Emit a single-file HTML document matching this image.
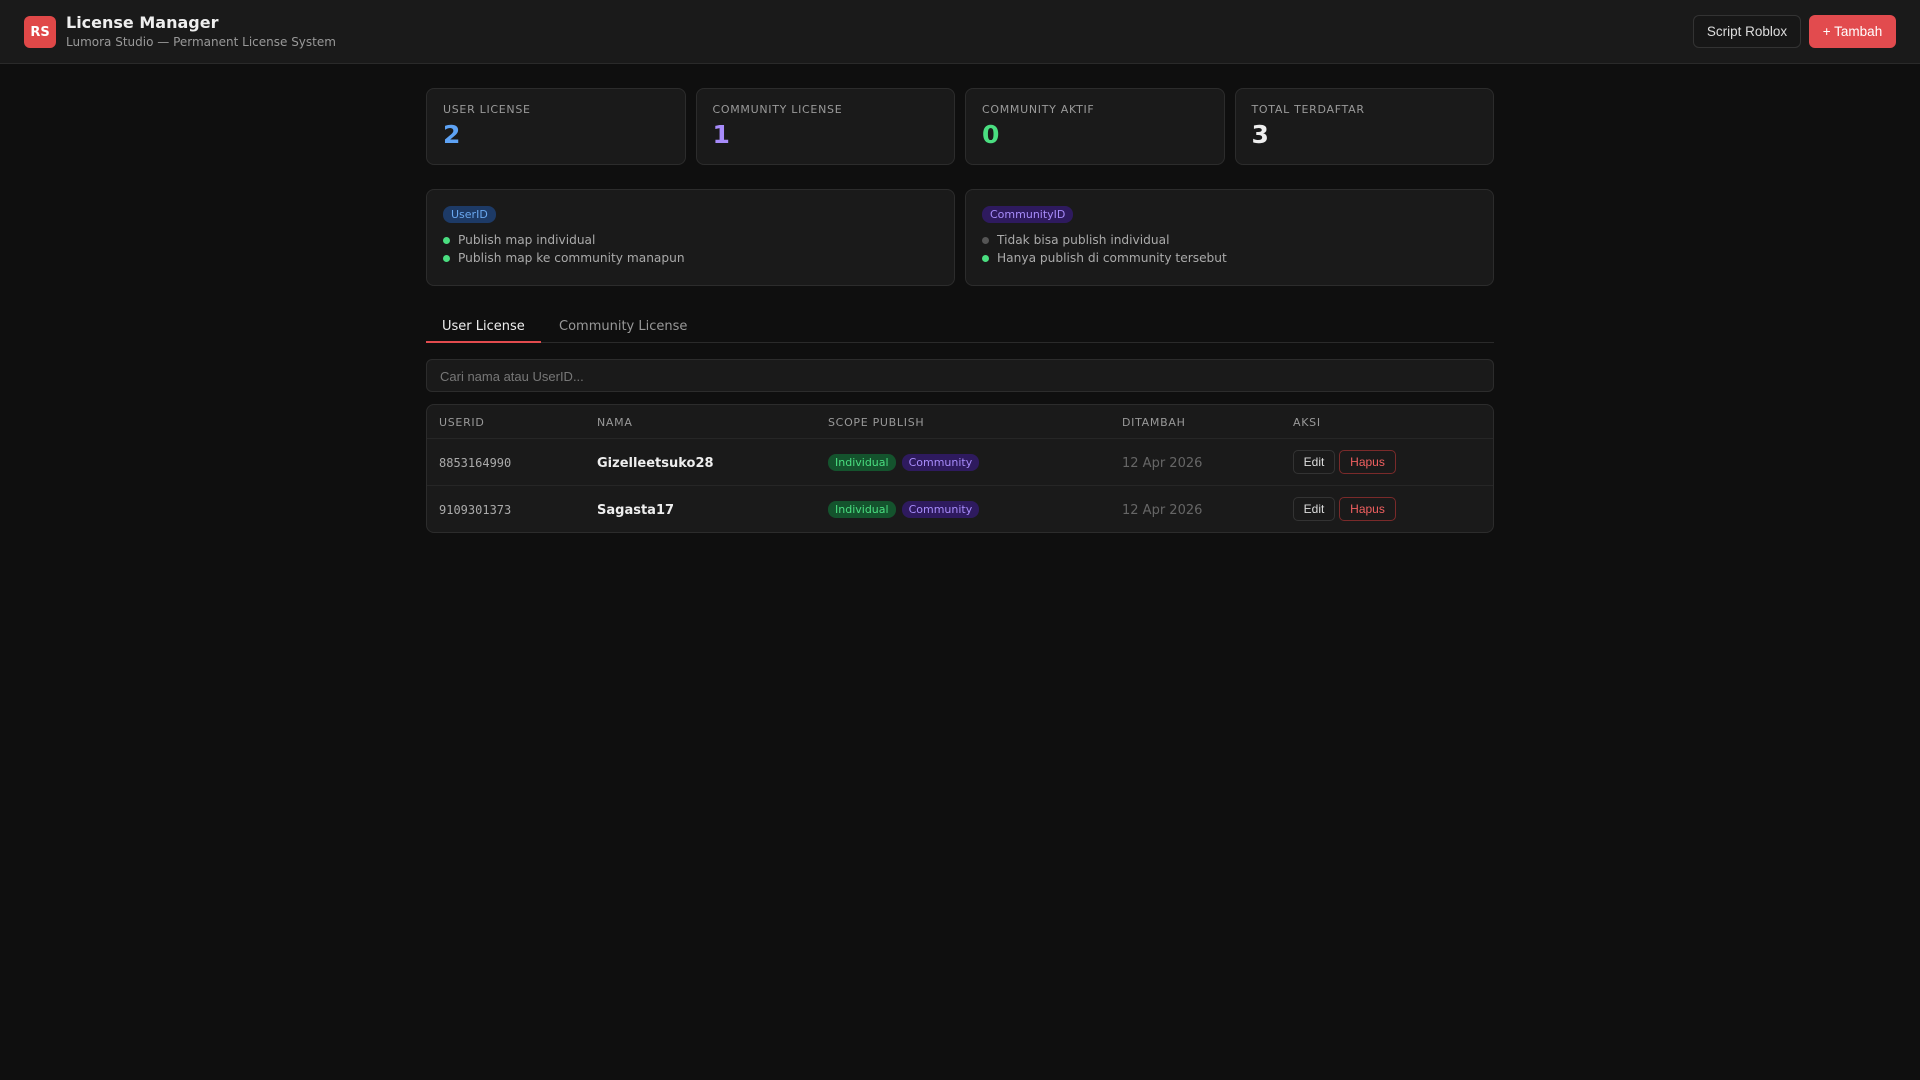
<!DOCTYPE html>
<html><head><meta charset="utf-8"><style>
*{box-sizing:border-box;margin:0;padding:0}
body{width:1920px;height:1080px;background:#0f0f0f;color:#e5e5e5;font-family:"DejaVu Sans",sans-serif;overflow:hidden}
.hdr{height:64px;background:#1a1a1a;border-bottom:1px solid #2a2a2a;position:relative}
.logo{position:absolute;left:24px;top:16px;width:32px;height:32px;border-radius:6px;background:#e04848;color:#fff;font-weight:bold;font-size:13px;display:flex;align-items:center;justify-content:center}
.t1{position:absolute;left:66px;top:13px;font-size:16px;font-weight:bold;color:#eee}
.t2{position:absolute;left:66px;top:35px;font-size:12px;color:#999}
.btn{position:absolute;top:15px;height:33px;border-radius:6px;font-family:"Liberation Sans",sans-serif;font-size:13.5px;display:flex;align-items:center;justify-content:center}
.b1{left:1693px;width:108px;border:1px solid #333;background:#171717;color:#ddd}
.b2{left:1809px;width:87px;background:#e24b4e;color:#fff}
.wrap{position:absolute;left:426px;width:1068px}
.stats{top:88px;display:flex;gap:10px}
.card{background:#1a1a1a;border:1px solid #2c2c2c;border-radius:8px}
.stat{flex:1;height:77px;padding:14px 16px}
.lab{font-size:11px;letter-spacing:.7px;color:#9a9a9a;margin-top:0}
.val{font-size:25px;font-weight:bold;margin-top:4px}
.info{top:189px;display:flex;gap:10px}
.inf{flex:1;height:97px;padding:13px 16px}
.bdg{display:inline-block;font-size:11px;padding:2px 8px;border-radius:8px}
.li{font-size:12.2px;color:#aaa;margin-top:4px;display:flex;align-items:center}
.li:first-of-type{margin-top:10px}
.dot{width:7px;height:7px;border-radius:50%;background:#4ade80;margin-right:8px}
.tabs{top:310px;height:33px;border-bottom:1px solid #2a2a2a;font-size:13px}
.tab{position:absolute;top:9px}
.search{top:359px;height:33px;background:#1a1a1a;border:1px solid #2c2c2c;border-radius:6px;font-size:13px;color:#777;padding:9px 13px;font-family:"Liberation Sans",sans-serif}
.tbl{top:404px;height:129px;overflow:hidden}
.row{position:relative;border-bottom:1px solid #262626}
.row>span{position:absolute}
.th{height:34px;font-size:11px;letter-spacing:.7px;color:#999}
.th span{top:11px}
.tr{height:47px;font-size:13px}
.tr>span{top:17px}
.mono{font-family:"DejaVu Sans Mono",monospace;color:#aaa;font-size:12px}
.pill{font-size:11px;padding:2px 7px;border-radius:8px;margin-right:6px}
.sb{display:inline-block;font-size:12px;border-radius:5px;height:24px;line-height:22px;text-align:center;font-family:"Liberation Sans",sans-serif;margin-right:4px}
</style></head><body>
<div class="hdr"><div class="logo">RS</div><div class="t1">License Manager</div><div class="t2">Lumora Studio — Permanent License System</div>
<div class="btn b1">Script Roblox</div><div class="btn b2">+ Tambah</div></div>
<div class="wrap stats">
<div class="card stat"><div class="lab">USER LICENSE</div><div class="val" style="color:#5ea3f5">2</div></div>
<div class="card stat"><div class="lab">COMMUNITY LICENSE</div><div class="val" style="color:#a78bfa">1</div></div>
<div class="card stat"><div class="lab">COMMUNITY AKTIF</div><div class="val" style="color:#4ade80">0</div></div>
<div class="card stat"><div class="lab">TOTAL TERDAFTAR</div><div class="val" style="color:#eee">3</div></div>
</div>
<div class="wrap info">
<div class="card inf"><span class="bdg" style="background:#1d3a66;color:#6aa8f0">UserID</span>
<div class="li"><i class="dot"></i>Publish map individual</div><div class="li"><i class="dot"></i>Publish map ke community manapun</div></div>
<div class="card inf"><span class="bdg" style="background:#2e1a5e;color:#a78bfa">CommunityID</span>
<div class="li"><i class="dot" style="background:#555"></i>Tidak bisa publish individual</div><div class="li"><i class="dot"></i>Hanya publish di community tersebut</div></div>
</div>
<div class="wrap tabs"><span class="tab" style="left:16px;color:#eee">User License</span><span class="tab" style="left:133px;color:#999">Community License</span>
<div style="position:absolute;left:0;top:31px;width:115px;height:2px;background:#e24b4e"></div></div>
<div class="wrap search">Cari nama atau UserID...</div>
<div class="wrap card tbl">
<div class="row th"><span style="left:12px">USERID</span><span style="left:170px">NAMA</span><span style="left:401px">SCOPE PUBLISH</span><span style="left:695px">DITAMBAH</span><span style="left:866px">AKSI</span></div>
<div class="row tr"><span class="mono" style="left:12px;top:17px">8853164990</span><span style="left:170px;font-weight:bold;color:#eee">Gizelleetsuko28</span>
<span style="left:401px;top:16px"><span class="pill" style="background:#14532d;color:#4ade80">Individual</span><span class="pill" style="background:#2e1a5e;color:#a78bfa">Community</span></span>
<span style="left:695px;color:#666">12 Apr 2026</span>
<span style="left:866px;top:11px"><span class="sb" style="width:42px;border:1px solid #333;color:#ddd">Edit</span><span class="sb" style="width:57px;border:1px solid #7a2a2a;color:#f06060">Hapus</span></span></div>
<div class="row tr" style="border:none"><span class="mono" style="left:12px;top:17px">9109301373</span><span style="left:170px;font-weight:bold;color:#eee">Sagasta17</span>
<span style="left:401px;top:16px"><span class="pill" style="background:#14532d;color:#4ade80">Individual</span><span class="pill" style="background:#2e1a5e;color:#a78bfa">Community</span></span>
<span style="left:695px;color:#666">12 Apr 2026</span>
<span style="left:866px;top:11px"><span class="sb" style="width:42px;border:1px solid #333;color:#ddd">Edit</span><span class="sb" style="width:57px;border:1px solid #7a2a2a;color:#f06060">Hapus</span></span></div>
</div>
</body></html>
